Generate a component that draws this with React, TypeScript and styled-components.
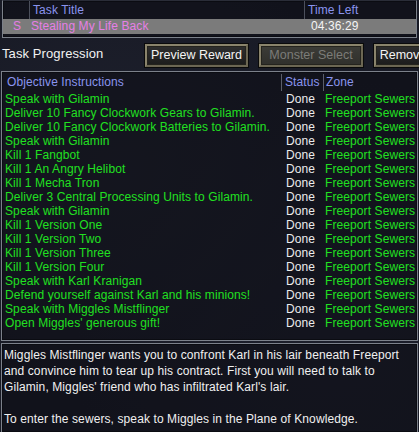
import React from 'react';
import styled, { createGlobalStyle } from 'styled-components';

const GlobalStyle = createGlobalStyle`
  html, body {
    margin: 0;
    padding: 0;
    background: #191b27;
    overflow: hidden;
  }
  body {
    font-family: "Liberation Sans", Arial, sans-serif;
    font-size: 12px;
    letter-spacing: 0.1px;
  }
`;

const Window = styled.div`
  width: 419px;
  height: 432px;
  display: flex;
  flex-direction: column;
  background:
    radial-gradient(ellipse at 30% 40%, rgba(40, 44, 60, 0.35), transparent 60%),
    radial-gradient(ellipse at 80% 80%, rgba(36, 40, 56, 0.3), transparent 55%),
    #181a25;
  overflow: hidden;
`;

const Panel = styled.div`
  border: 1px solid #7c818b;
  box-shadow: inset 0 0 0 1px #0b0c12;
  background: rgba(12, 13, 20, 0.55);
  overflow: hidden;
`;

const TaskList = styled(Panel)`
  height: 36px;
  margin: 0 2px;
  border-top-color: #2a2d38;
`;

const TaskGrid = styled.div`
  display: grid;
  grid-template-columns: 26px 275px 1fr;
  align-items: center;
`;

const HeaderCell = styled.div<{ $sep?: boolean }>`
  height: 18px;
  line-height: 18px;
  color: #8a94ee;
  padding-left: 3px;
  border-left: ${p => (p.$sep ? '1px solid #4c505c' : 'none')};
  white-space: nowrap;
  overflow: hidden;
`;

const TaskRow = styled.div`
  grid-column: 1 / 4;
  display: grid;
  grid-template-columns: 26px 277px 1fr;
  height: 15px;
  line-height: 15px;
  background: #7b7b7b;
  white-space: nowrap;
`;

const Cell = styled.div<{ $color: string; $pad?: number }>`
  color: ${p => p.$color};
  padding-left: ${p => p.$pad ?? 0}px;
  overflow: hidden;
`;

const ProgressBar = styled.div`
  height: 32px;
  display: flex;
  align-items: center;
  padding-top: 1px;
`;

const SectionLabel = styled.div`
  flex: 0 0 143px;
  padding-left: 2px;
  color: #f2f2f2;
  font-size: 13px;
  margin-top: -4px;
`;

const Bevel = styled.button<{ $disabled?: boolean; $w: number }>`
  flex: 0 0 auto;
  width: ${p => p.$w}px;
  height: 23px;
  margin-right: 11px;
  padding: 0;
  font-family: "Liberation Sans", Arial, sans-serif;
  font-size: 12.5px;
  color: ${p => (p.$disabled ? '#7c7c78' : '#f4f4f4')};
  background: ${p =>
    p.$disabled
      ? 'linear-gradient(#3c3c37, #30302c)'
      : 'linear-gradient(#2f2f2f, #1c1c1c)'};
  border: 2px solid #6c6753;
  border-top-color: #8a846c;
  border-left-color: #8a846c;
  box-shadow: 0 0 0 1px #0a0a0a, inset 0 0 0 1px #24231d;
  white-space: nowrap;
  overflow: hidden;
  text-align: center;
`;

const Objectives = styled(Panel)`
  height: 268px;
  margin: 0 1px;
`;

const ObjGrid = styled.div`
  display: grid;
  grid-template-columns: 279px 42px 1fr;
  padding-top: 2px;
`;

const ObjHeader = styled.div<{ $sep?: boolean; $pad: number }>`
  height: 17px;
  line-height: 17px;
  color: #8a94ee;
  padding-left: ${p => p.$pad}px;
  border-left: ${p => (p.$sep ? '1px solid #5a5e6a' : 'none')};
  margin-bottom: 1px;
  white-space: nowrap;
`;

const ObjCell = styled.div<{ $color: string; $pad: number }>`
  height: 14px;
  line-height: 14px;
  color: ${p => p.$color};
  padding-left: ${p => p.$pad}px;
  white-space: nowrap;
  overflow: hidden;
`;

const Description = styled(Panel)`
  flex: 1;
  margin: 2px 1px 0;
  padding: 3px 2px 0;
  color: #f0f0f0;
  line-height: 16px;
  border-bottom: none;
  white-space: nowrap;
`;

const GREEN = '#21e021';
const WHITE = '#ececec';

const objectives = [
  'Speak with Gilamin',
  'Deliver 10 Fancy Clockwork Gears to Gilamin.',
  'Deliver 10 Fancy Clockwork Batteries to Gilamin.',
  'Speak with Gilamin',
  'Kill 1 Fangbot',
  'Kill 1 An Angry Helibot',
  'Kill 1 Mecha Tron',
  'Deliver 3 Central Processing Units to Gilamin.',
  'Speak with Gilamin',
  'Kill 1 Version One',
  'Kill 1 Version Two',
  'Kill 1 Version Three',
  'Kill 1 Version Four',
  'Speak with Karl Kranigan',
  'Defend yourself against Karl and his minions!',
  'Speak with Miggles Mistflinger',
  "Open Miggles' generous gift!",
];

export default function App() {
  return (
    <Window>
      <GlobalStyle />
      <TaskList>
        <TaskGrid>
          <HeaderCell />
          <HeaderCell $sep>Task Title</HeaderCell>
          <HeaderCell $sep>Time Left</HeaderCell>
          <TaskRow>
            <Cell $color="#e47ce4" $pad={10}>S</Cell>
            <Cell $color="#e67fe6" $pad={2}>Stealing My Life Back</Cell>
            <Cell $color="#f4f4f4" $pad={5}>04:36:29</Cell>
          </TaskRow>
        </TaskGrid>
      </TaskList>
      <ProgressBar>
        <SectionLabel>Task Progression</SectionLabel>
        <Bevel $w={103}>Preview Reward</Bevel>
        <Bevel $w={104} $disabled>Monster Select</Bevel>
        <Bevel $w={58}>Remove</Bevel>
      </ProgressBar>
      <Objectives>
        <ObjGrid>
          <ObjHeader $pad={5}>Objective Instructions</ObjHeader>
          <ObjHeader $sep $pad={3}>Status</ObjHeader>
          <ObjHeader $sep $pad={2}>Zone</ObjHeader>
          {objectives.map((o, i) => (
            <React.Fragment key={i}>
              <ObjCell $color={GREEN} $pad={3}>{o}</ObjCell>
              <ObjCell $color={WHITE} $pad={5}>Done</ObjCell>
              <ObjCell $color={GREEN} $pad={2}>Freeport Sewers</ObjCell>
            </React.Fragment>
          ))}
        </ObjGrid>
      </Objectives>
      <Description>
        Miggles Mistflinger wants you to confront Karl in his lair beneath Freeport
        <br />
        and convince him to tear up his contract. First you will need to talk to
        <br />
        Gilamin, Miggles' friend who has infiltrated Karl's lair.
        <br />
        <br />
        To enter the sewers, speak to Miggles in the Plane of Knowledge.
      </Description>
    </Window>
  );
}
